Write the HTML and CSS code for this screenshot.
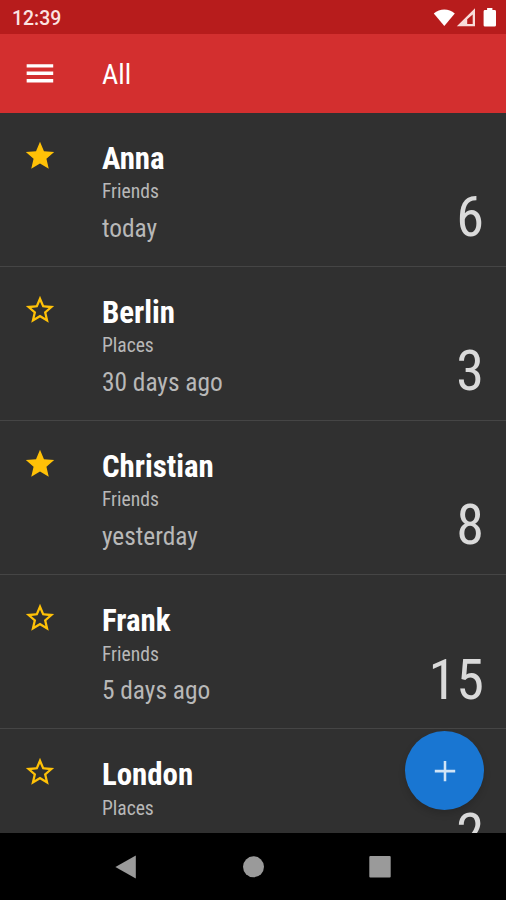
FILE: index.html
```html
<!DOCTYPE html>
<html lang="en">
<head>
<meta charset="utf-8">
<title>All</title>
<link rel="stylesheet" href="styles.css">
</head>
<body>
<svg class="defs" aria-hidden="true">
  <symbol id="star" viewBox="0 0 24 24"><path d="M12 17.27 18.18 21l-1.64-7.03L22 9.24l-7.19-.61L12 2 9.19 8.63 2 9.24l5.46 4.73L5.82 21z"/></symbol>
  <symbol id="star-outline" viewBox="0 0 24 24"><path d="m22 9.24-7.19-.62L12 2 9.19 8.63 2 9.24l5.46 4.73L5.82 21 12 17.27 18.18 21l-1.63-7.03L22 9.24zM12 15.4l-3.76 2.27 1-4.28-3.32-2.88 4.38-.38L12 6.1l1.71 4.04 4.38.38-3.32 2.88 1 4.28L12 15.4z"/></symbol>
</svg>
<div class="screen">
  <div class="status">
    <span class="clock">12:39</span>
    <svg class="indicators" width="64" height="22" viewBox="0 0 64 22" fill="#fff">
      <path d="M0.8 5.4C6.8.3 15.8.3 21.8 5.4L11.3 18z"/>
      <path fill-rule="evenodd" d="M23.8 18.3 42 .2V18.3zM39.7 6.6 34.2 11.3V16.1H39.7z" fill="#f8dcda"/>
      <path d="M54.1 0h5.3v2h2.2q1.4 0 1.4 1.4V17.2q0 1.4-1.4 1.4h-9.6q-1.4 0-1.4-1.4V3.4q0-1.4 1.4-1.4h2.1z"/>
    </svg>
  </div>
  <header class="appbar">
    <svg class="menu" viewBox="0 0 24 24"><path d="M3.2 18.1h18.2v-2.3H3.2v2.3zm0-5.1h18.2v-2.3H3.2V13zm0-7.4v2.3h18.2V5.6H3.2z"/></svg>
    <h1 class="title">All</h1>
  </header>
  <main class="list">
    <article class="row">
      <svg class="star"><use href="#star"/></svg>
      <div class="info"><h2 class="name">Anna</h2><p class="group">Friends</p><p class="when">today</p></div>
      <span class="count">6</span>
    </article>
    <article class="row">
      <svg class="star"><use href="#star-outline"/></svg>
      <div class="info"><h2 class="name">Berlin</h2><p class="group">Places</p><p class="when">30 days ago</p></div>
      <span class="count">3</span>
    </article>
    <article class="row">
      <svg class="star"><use href="#star"/></svg>
      <div class="info"><h2 class="name">Christian</h2><p class="group">Friends</p><p class="when">yesterday</p></div>
      <span class="count">8</span>
    </article>
    <article class="row">
      <svg class="star"><use href="#star-outline"/></svg>
      <div class="info"><h2 class="name">Frank</h2><p class="group">Friends</p><p class="when">5 days ago</p></div>
      <span class="count">15</span>
    </article>
    <article class="row">
      <svg class="star"><use href="#star-outline"/></svg>
      <div class="info"><h2 class="name">London</h2><p class="group">Places</p></div>
      <span class="count">2</span>
    </article>
    <button class="fab" aria-label="Add"><svg viewBox="0 0 24 24"><path d="M19.2 13h-6.3v6.2h-1.8V13H4.8v-1.8h6.3V4.9h1.8v6.3h6.3z"/></svg></button>
  </main>
  <nav class="navbar">
    <svg viewBox="0 0 24 24"><path d="M1.4 12 21.8.4V23.6z"/></svg>
    <svg viewBox="0 0 24 24"><circle cx="12.5" cy="11.8" r="10.5"/></svg>
    <svg viewBox="0 0 24 24"><rect x="1.3" y="1" width="21.4" height="21.6" rx="1"/></svg>
  </nav>
</div>
</body>
</html>
```
FILE: styles.css
```css
* { box-sizing: border-box; margin: 0; padding: 0; }

body {
  background: #000;
  font-family: "Roboto Condensed", Roboto, sans-serif;
}

.defs { display: none; }

.screen {
  display: flex;
  flex-direction: column;
  width: 506px;
  height: 900px;
  overflow: hidden;
}

.status {
  display: flex;
  flex: none;
  align-items: flex-start;
  justify-content: space-between;
  height: 34px;
  padding: 8px 9px 0 12px;
  background: #b71c1c;
}

.clock {
  padding-top: 1px;
  color: #fbe3e1;
  font: 500 19.4px/20px Roboto, sans-serif;
}

.appbar {
  display: flex;
  flex: none;
  align-items: center;
  height: 78.6px;
  padding-left: 22px;
  background: #d32f2f;
}

.menu {
  width: 35px;
  height: 35px;
  margin-right: 45px;
  fill: #fff;
}

.title {
  color: #fff;
  font-size: 28.1px;
  font-weight: 400;
  line-height: 36px;
  padding-top: 3px;
}

.list {
  position: relative;
  flex: none;
  height: 720.9px;
  background: #303030;
  overflow: hidden;
}

.row {
  display: flex;
  align-items: flex-start;
  height: 154.2px;
  padding: 28px 22px 0 22.5px;
  border-bottom: 1.4px solid #454545;
}

.star {
  flex: none;
  width: 34px;
  height: 34px;
  margin: -2px 45.4px 0 0;
  fill: #ffc107;
}

.info { flex: 1; }

.name {
  color: #fff;
  font-size: 30.9px;
  font-weight: 700;
  line-height: 36px;
}

.group {
  margin-top: 3.5px;
  color: #b8b8b8;
  font-size: 19.6px;
  line-height: 23px;
}

.when {
  margin-top: 9.6px;
  color: #b8b8b8;
  font-size: 25.4px;
  line-height: 30px;
}

.count {
  margin-top: 43.4px;
  color: #dadada;
  font-size: 56.2px;
  line-height: 66px;
}

.fab {
  position: absolute;
  right: 22px;
  bottom: 23px;
  display: grid;
  place-items: center;
  width: 79px;
  height: 79px;
  border: 0;
  border-radius: 50%;
  background: #1976d2;
  box-shadow: 0 4px 7px rgba(0, 0, 0, .15);
}

.fab svg {
  width: 34px;
  height: 34px;
  fill: #d1e4f6;
}

.navbar {
  display: flex;
  flex: 1;
  align-items: center;
  justify-content: space-between;
  padding: 0 114px;
  background: #000;
}

.navbar svg {
  width: 24px;
  height: 24px;
  fill: #9a9a9a;
}
```
